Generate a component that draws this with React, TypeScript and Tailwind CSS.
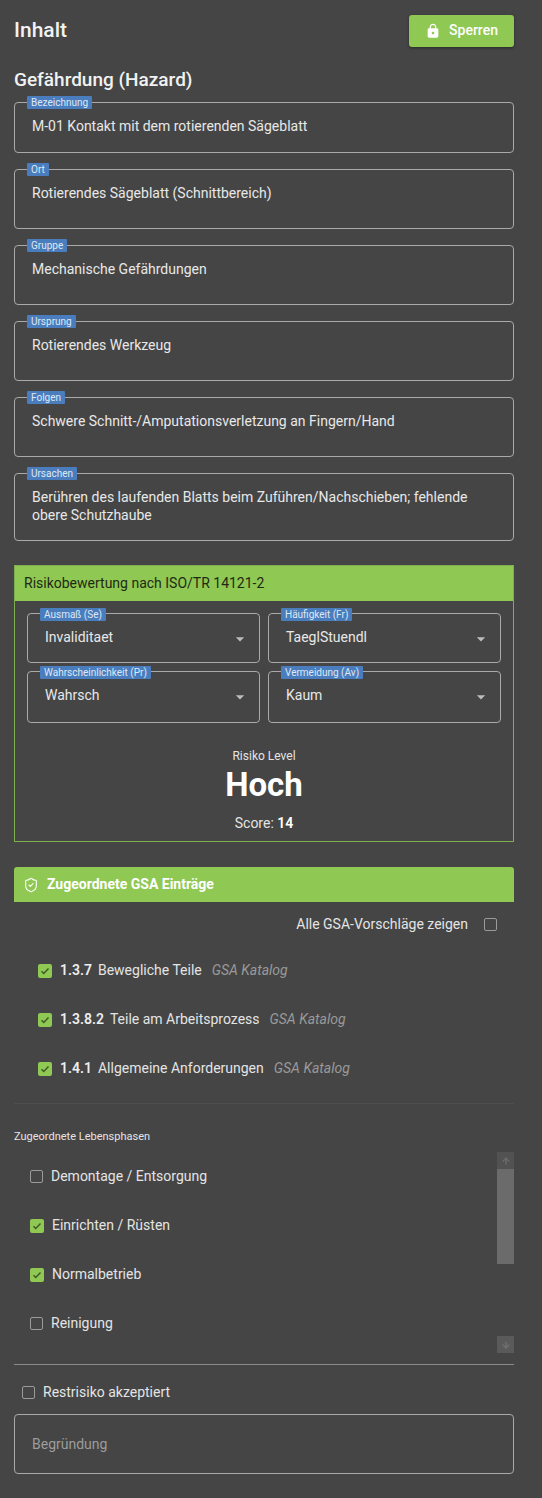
import { ShieldCheck, ArrowUp, ArrowDown } from 'lucide-react';

function Field({ label, value, h }: { label: string; value: string; h: string }) {
  return (
    <div className={`relative rounded border border-[#a9a9a9] px-[17px] pt-[14px] text-[14px] leading-[18px] text-[#e8e8e8] ${h}`}>
      <span className="absolute left-[12px] top-[-7px] rounded-[1px] bg-[#4a7dbd] px-[4px] text-[10px] leading-[13px] text-[#dfe8f4]">{label}</span>
      {value}
    </div>
  );
}

function Select({ label, value, h }: { label: string; value: string; h: string }) {
  return (
    <div className={`relative flex items-start justify-between rounded border border-[#a9a9a9] pl-[17px] pr-[9px] pt-[14px] text-[14px] leading-[18px] text-[#e8e8e8] ${h}`}>
      <span className="absolute left-[12px] top-[-6px] rounded-[1px] bg-[#4a7dbd] px-[4px] text-[10px] leading-[13px] text-[#dfe8f4]">{label}</span>
      {value}
      <svg viewBox="0 0 24 24" className="mt-[1px] h-[20px] w-[20px] fill-[#bdbdbd]">
        <path d="M7 10l5 5 5-5z" />
      </svg>
    </div>
  );
}

function Check({ on }: { on?: boolean }) {
  if (on) {
    return (
      <span className="flex h-[14px] w-[14px] shrink-0 items-center justify-center rounded-[2px] bg-[#8fc853]">
        <svg viewBox="0 0 24 24" className="h-[12px] w-[12px] fill-none stroke-[#3f5a28] stroke-[3]">
          <path d="M5 12.5l4.5 4.5L19 7" />
        </svg>
      </span>
    );
  }
  return <span className="h-[13px] w-[13px] shrink-0 rounded-[2px] border-[1.5px] border-[#9a9a9a]" />;
}

function GsaRow({ code, name }: { code: string; name: string }) {
  return (
    <div className="flex h-[49px] items-center pl-[24px] text-[14px] text-[#e4e4e4]">
      <Check on />
      <b className="ml-[8px] font-semibold text-[#eeeeee]">{code}</b>
      <span className="ml-[6px]">{name}</span>
      <i className="ml-[10px] text-[#9a9a9a]">GSA Katalog</i>
    </div>
  );
}

function PhaseRow({ name, on }: { name: string; on?: boolean }) {
  return (
    <div className="flex h-[49px] items-center gap-[8px] pl-[16px] text-[14px] text-[#e4e4e4]">
      <Check on={on} />
      {name}
    </div>
  );
}

export default function App() {
  return (
    <div className="h-[1498px] w-[542px] overflow-hidden bg-[#454545] pl-[14px] pr-[28px] pt-[14px] font-['Roboto','Noto_Sans',sans-serif]">
      <div className="flex h-[33px] items-center justify-between">
        <h1 className="text-[21px] font-medium text-[#f2f2f2]">Inhalt</h1>
        <button className="flex h-[32px] w-[105px] items-center justify-center gap-[8px] rounded-[3px] bg-[#8fc853] text-[14px] font-medium text-white shadow-[0_1px_3px_rgba(0,0,0,0.4)]">
          <svg viewBox="0 0 24 24" className="h-[16px] w-[16px] fill-white">
            <path d="M18 8h-1V6c0-2.76-2.24-5-5-5S7 3.24 7 6v2H6c-1.1 0-2 .9-2 2v10c0 1.1.9 2 2 2h12c1.1 0 2-.9 2-2V10c0-1.1-.9-2-2-2zm-6 9c-1.1 0-2-.9-2-2s.9-2 2-2 2 .9 2 2-.9 2-2 2zm3.1-9H8.9V6c0-1.71 1.39-3.1 3.1-3.1 1.71 0 3.1 1.39 3.1 3.1v2z" />
          </svg>
          Sperren
        </button>
      </div>

      <h2 className="mt-[20px] text-[19px] font-medium leading-[26px] text-[#f2f2f2]">Gefährdung (Hazard)</h2>

      <div className="mt-[9px] flex flex-col gap-[16px]">
        <Field label="Bezeichnung" value="M-01 Kontakt mit dem rotierenden Sägeblatt" h="h-[51px]" />
        <Field label="Ort" value="Rotierendes Sägeblatt (Schnittbereich)" h="h-[60px]" />
        <Field label="Gruppe" value="Mechanische Gefährdungen" h="h-[60px]" />
        <Field label="Ursprung" value="Rotierendes Werkzeug" h="h-[60px]" />
        <Field label="Folgen" value="Schwere Schnitt-/Amputationsverletzung an Fingern/Hand" h="h-[60px]" />
        <Field label="Ursachen" value="Berühren des laufenden Blatts beim Zuführen/Nachschieben; fehlende obere Schutzhaube" h="h-[68px]" />
      </div>

      <section className="mt-[24px] h-[277px] border border-[#7fae4c]">
        <div className="flex h-[35px] items-center bg-[#8fc853] px-[9px] text-[14px] text-[#1f2a14]">Risikobewertung nach ISO/TR 14121-2</div>
        <div className="grid grid-cols-2 gap-x-[8px] gap-y-[8px] px-[12px] pt-[12px]">
          <Select label="Ausmaß (Se)" value="Invaliditaet" h="h-[50px]" />
          <Select label="Häufigkeit (Fr)" value="TaeglStuendl" h="h-[50px]" />
          <Select label="Wahrscheinlichkeit (Pr)" value="Wahrsch" h="h-[52px]" />
          <Select label="Vermeidung (Av)" value="Kaum" h="h-[52px]" />
        </div>
        <div className="mt-[25px] flex flex-col items-center text-[#e4e4e4]">
          <span className="text-[12px] leading-[16px]">Risiko Level</span>
          <span className="text-[33px] font-bold leading-[42px] text-white">Hoch</span>
          <span className="mt-[8px] text-[14px] leading-[18px]">Score: <b className="font-semibold text-white">14</b></span>
        </div>
      </section>

      <div className="mt-[25px] flex h-[35px] items-center gap-[8px] rounded-t-[3px] bg-[#8fc853] pl-[9px] text-[14px] font-bold text-white">
        <ShieldCheck size={16} strokeWidth={1.6} />
        Zugeordnete GSA Einträge
      </div>

      <div className="mt-[11px] flex h-[22px] items-center justify-end gap-[16px] pr-[17px] text-[14px] text-[#e4e4e4]">
        Alle GSA-Vorschläge zeigen
        <Check />
      </div>

      <div className="mt-[11px]">
        <GsaRow code="1.3.7" name="Bewegliche Teile" />
        <GsaRow code="1.3.8.2" name="Teile am Arbeitsprozess" />
        <GsaRow code="1.4.1" name="Allgemeine Anforderungen" />
      </div>

      <div className="mt-[10px] border-t border-[#4e4e4e]" />

      <div className="mt-[25px] text-[11px] leading-[16px] text-[#e4e4e4]">Zugeordnete Lebensphasen</div>

      <div className="mt-[7px] flex h-[201px]">
        <div className="flex-1">
          <PhaseRow name="Demontage / Entsorgung" />
          <PhaseRow name="Einrichten / Rüsten" on />
          <PhaseRow name="Normalbetrieb" on />
          <PhaseRow name="Reinigung" />
        </div>
        <div className="flex w-[17px] flex-col">
          <div className="flex h-[17px] items-center justify-center bg-[#525252] text-[#6e6e6e]"><ArrowUp size={10} strokeWidth={3} /></div>
          <div className="h-[95px] bg-[#6b6b6b]" />
          <div className="flex-1" />
          <div className="flex h-[17px] items-center justify-center bg-[#5a5a5a] text-[#727272]"><ArrowDown size={10} strokeWidth={3} /></div>
        </div>
      </div>

      <div className="mt-[11px] border-t border-[#8a8a8a]" />

      <div className="mt-[16px] flex h-[22px] items-center gap-[8px] pl-[8px] text-[14px] text-[#e4e4e4]">
        <Check />
        Restrisiko akzeptiert
      </div>

      <div className="mt-[11px] h-[60px] rounded border border-[#a9a9a9] pl-[17px] pt-[19px] text-[14px] leading-[20px] text-[#9c9c9c]">Begründung</div>
    </div>
  );
}
